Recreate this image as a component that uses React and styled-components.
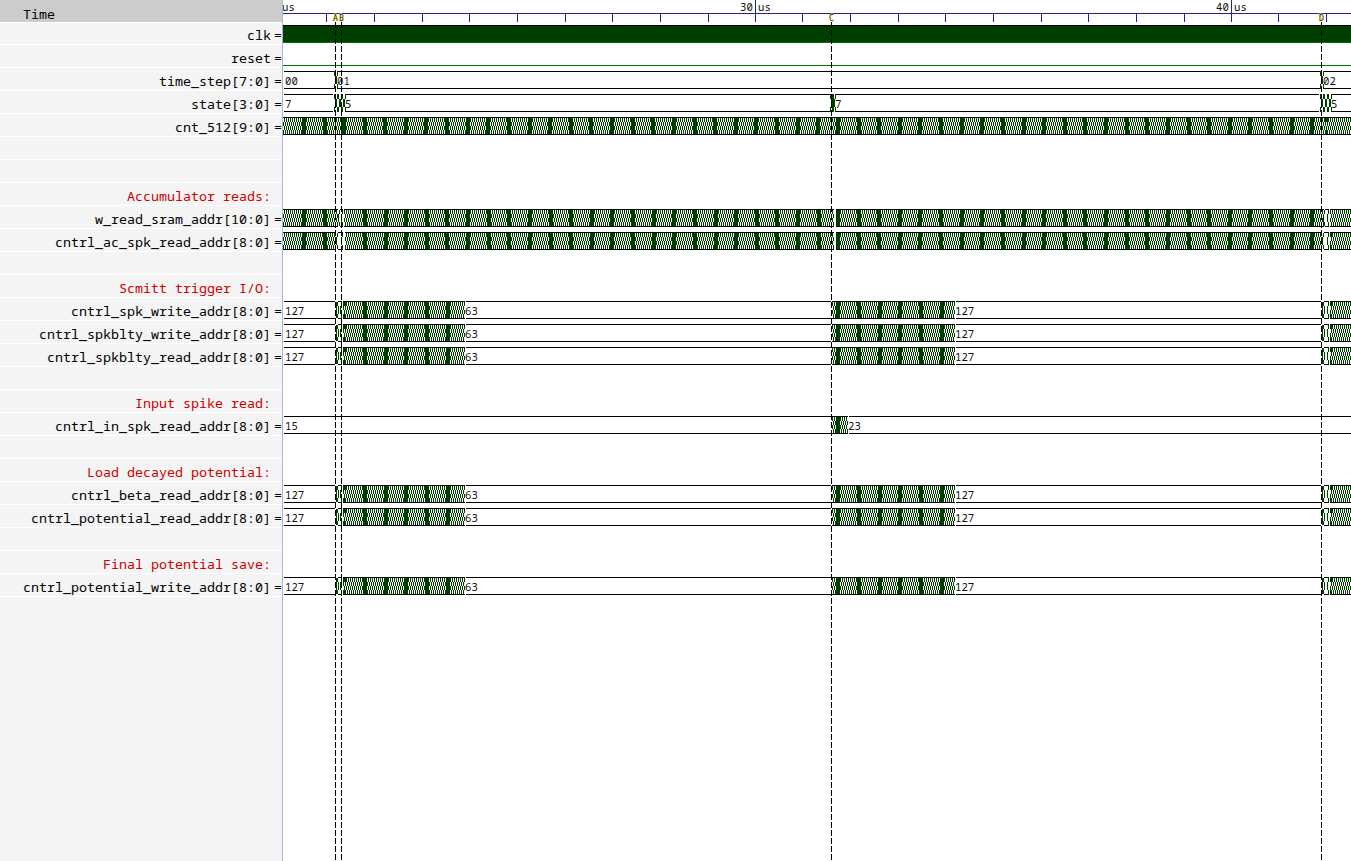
import React from 'react';
import styled, { createGlobalStyle } from 'styled-components';

const Global = createGlobalStyle`
  body { margin: 0; background: #fff; overflow: hidden; }
`;
const mono = '"Noto Sans Mono", "DejaVu Sans Mono", "Liberation Mono", monospace';

const Viewer = styled.div`
  display: grid;
  grid-template-columns: 282px 1fr;
  width: 1351px;
  height: 861px;
  overflow: hidden;
`;
const Names = styled.div`
  background: #f4f4f4;
  font-family: ${mono};
  font-size: 13.333px;
  color: #000;
`;
const Header = styled.div`
  box-sizing: border-box;
  height: 22px;
  padding: 5px 0 0 23px;
  line-height: 18px;
  background: #cccccc;
`;
const NameRow = styled.div`
  box-sizing: border-box;
  display: flex;
  justify-content: flex-end;
  height: ${p => (p.$first ? 22 : 23)}px;
  padding: ${p => (p.$first ? 3 : 4)}px ${p => (p.$section ? 11 : 0)}px 0 0;
  border-top: 1px solid #fff;
  line-height: 18px;
  white-space: pre;
  color: ${p => (p.$section ? '#cc0000' : '#000')};
`;
const LastLine = styled.div`
  height: 1px;
  background: #fff;
`;
const Equals = styled.span`
  width: 8px;
  margin-left: 3px;
`;
const Waves = styled.svg`
  display: block;
  border-left: 1px solid #a5b8d2;
  background: #fff;
  font-family: ${mono};
  font-size: 10.667px;
`;

const DARK = '#003e00';
const STEP = 20.62;
const bus = 'bus';
const burst = [
  { s: 'flat', a: 284, b: 335, v: '127' },
  { s: 'mark', a: 336, b: 343 },
  { s: 'hatch', a: 343, b: 465, o: 365, step: 20.7, notch: true },
  { s: 'flat', a: 466, b: 831, v: '63', x: 465 },
  { s: 'hatch', a: 832, b: 955, o: 838, step: 20.8 },
  { s: 'flat', a: 956, b: 1321, v: '127', x: 955 },
  { s: 'mark', a: 1322, b: 1330 },
  { s: 'hatch', a: 1330, b: 1351, notch: true },
];
const rows = [
  { n: 'clk', t: 'clk' },
  { n: 'reset', t: 'low' },
  { n: 'time_step[7:0]', t: bus, p: [
    { s: 'flat', a: 284, b: 335, v: '00' }, { s: 'cross', a: 334 },
    { s: 'flat', a: 337, b: 1320, v: '01', x: 337 }, { s: 'cross', a: 1320 }, { s: 'flat', a: 1324, b: 1351, v: '02', x: 1323 }] },
  { n: 'state[3:0]', t: bus, p: [
    { s: 'flat', a: 284, b: 333, v: '7' }, { s: 'cross', a: 334 }, { s: 'cross', a: 338 }, { s: 'cross', a: 342 },
    { s: 'flat', a: 346, b: 830, v: '5', x: 345 }, { s: 'cross', a: 830 }, { s: 'cross', a: 832 },
    { s: 'flat', a: 836, b: 1319, v: '7', x: 835 }, { s: 'cross', a: 1320 }, { s: 'cross', a: 1324 }, { s: 'cross', a: 1328 }, { s: 'flat', a: 1332, b: 1351, v: '5', x: 1331 }] },
  { n: 'cnt_512[9:0]', t: bus, p: [
    { s: 'hatch', a: 283, b: 337, o: 304 }, { s: 'hatch', a: 337, b: 834, o: 344 },
    { s: 'hatch', a: 834, b: 1325, o: 838 }, { s: 'hatch', a: 1325, b: 1351, notch: true }] },
  {}, {},
  { n: 'Accumulator reads:', section: true },
  { n: 'w_read_sram_addr[10:0]', t: bus, p: [
    { s: 'hatch', a: 283, b: 338, o: 304 }, { s: 'gap', a: 338, b: 344 }, { s: 'hatch', a: 344, b: 834, o: 365 },
    { s: 'hatch', a: 836, b: 1324, o: 838 }, { s: 'gap', a: 1323, b: 1330 }, { s: 'hatch', a: 1330, b: 1351 }] },
  { n: 'cntrl_ac_spk_read_addr[8:0]', t: bus, p: [
    { s: 'hatch', a: 283, b: 336, o: 304 }, { s: 'gap', a: 336, b: 344 }, { s: 'hatch', a: 345, b: 834, o: 365 },
    { s: 'hatch', a: 836, b: 1322, o: 838 }, { s: 'gap', a: 1322, b: 1330 }, { s: 'hatch', a: 1330, b: 1351, notch: true }] },
  {},
  { n: 'Scmitt trigger I/O:', section: true },
  { n: 'cntrl_spk_write_addr[8:0]', t: bus, p: burst },
  { n: 'cntrl_spkblty_write_addr[8:0]', t: bus, p: burst },
  { n: 'cntrl_spkblty_read_addr[8:0]', t: bus, p: burst },
  {},
  { n: 'Input spike read:', section: true },
  { n: 'cntrl_in_spk_read_addr[8:0]', t: bus, p: [{ s: 'flat', a: 284, b: 831, v: '15' }, { s: 'hatch', a: 832, b: 848, o: 838 }, { s: 'flat', a: 849, b: 1351, v: '23', x: 848 }] },
  {},
  { n: 'Load decayed potential:', section: true },
  { n: 'cntrl_beta_read_addr[8:0]', t: bus, p: burst },
  { n: 'cntrl_potential_read_addr[8:0]', t: bus, p: burst },
  {},
  { n: 'Final potential save:', section: true },
  { n: 'cntrl_potential_write_addr[8:0]', t: bus, p: burst },
];

function Rails({ a, b, y }) {
  return (
    <>
      <rect x={a} y={y} width={b - a} height="1" />
      <rect x={a} y={y + 17} width={b - a} height="1" />
    </>
  );
}

function Segment({ g, y }) {
  const w = g.b - g.a;
  if (g.s === 'flat') {
    return (
      <g>
        <Rails a={g.a} b={g.b} y={y} />
        <text x={g.x || 285} y={y + 14} fill="#111">{g.v}</text>
      </g>
    );
  }
  if (g.s === 'cross') {
    return <path d={`M${g.a + 0.5} ${y}v5m1 0v8m-1 0v5M${g.a + 3.5} ${y}v5m-1 0v8m1 0v5`} stroke={DARK} fill="none" />;
  }
  if (g.s === 'gap' || g.s === 'mark') {
    return (
      <g>
        <Rails a={g.a + 2} b={g.b - 1} y={y} />
        <path d={`M${g.a + 1.5} ${y + 1}v4m-1 0v8m1 0v4M${g.b - 1.5} ${y + 1}v4m-1 0v8m1 0v4`} stroke={DARK} fill="none" />
        {g.s === 'mark' && <path d={`M${g.a + 0.5} ${y + 1}v4m2 0v8m-2 0v4`} stroke={DARK} fill="none" />}
      </g>
    );
  }
  const solid = [];
  if (g.o) for (let x = g.o; x < g.b - 1; x += g.step || STEP) solid.push(Math.round(x));
  return (
    <g>
      <rect x={g.a} y={y} width={w} height="18" fill="url(#hatch)" />
      {solid.map(x => (
        <path key={x} d={`M${x - 2} ${y + 1}h4v16h-4z`} fill={DARK} />
      ))}
      {g.notch && <path d={`M${g.a} ${y + 1}h3v4h-3zM${g.a} ${y + 13}h2v4h-2z`} fill={DARK} />}
      <Rails a={g.a} b={g.b} y={y} />
    </g>
  );
}

const ticks = [326, 374, 422, 469, 517, 565, 612, 660, 708, 802, 850, 898, 945, 993, 1041, 1088, 1136, 1184, 1278, 1326];
const markers = [['A', 335], ['B', 341], ['C', 831], ['D', 1321]];

export default function App() {
  return (
    <>
      <Global />
      <Viewer>
        <Names>
          <Header>Time</Header>
          {rows.map((r, i) => (
            <NameRow key={i} $section={r.section} $first={i === 0}>
              {r.n}{r.t && <Equals>=</Equals>}
            </NameRow>
          ))}
          <LastLine />
        </Names>
        <Waves width="1068" height="861" viewBox="283 0 1068 861" shapeRendering="crispEdges">
          <defs>
            <pattern id="hatch" x="0" y="2" width="2" height="23" patternUnits="userSpaceOnUse">
              <path d="M0 0h1v5h-1zM1 5h1v4h-1zM0 9h1v4h-1zM1 13h1v5h-1z" fill={DARK} />
            </pattern>
          </defs>
          <rect x="283" y="13" width="1068" height="1" fill="#222288" />
          {ticks.map(x => <rect key={x} x={x} y="14" width="1" height="8" fill="#222288" />)}
          {[755, 1231].map(x => <rect key={x} x={x} y="0" width="1" height="22" fill="#222288" />)}
          <text x="282" y="11" fill="#111">us</text>
          <text x="740" y="11" fill="#111">30</text><text x="758" y="11" fill="#111">us</text>
          <text x="1216" y="11" fill="#111">40</text><text x="1234" y="11" fill="#111">us</text>
          <rect x="283" y="25" width="1068" height="18" fill={DARK} />
          <rect x="283" y="25" width="1068" height="1" />
          <rect x="283" y="42" width="1068" height="1" fill="#007800" />
          <rect x="283" y="65" width="1068" height="1" fill="#007800" />
          {rows.map((r, i) => r.p && r.p.map((g, j) => <Segment key={`${i}-${j}`} g={g} y={25 + i * 23} />))}
          {markers.map(([n, x]) => (
            <g key={n}>
              <path d={`M${x + 0.5} 22V861`} stroke="#000" strokeDasharray="6 2" />
              <text x={x - 2} y="21" fontSize="8" fill="#2c2800" stroke="#f0ea80" strokeWidth="1" paintOrder="stroke">{n}</text>
            </g>
          ))}
        </Waves>
      </Viewer>
    </>
  );
}
